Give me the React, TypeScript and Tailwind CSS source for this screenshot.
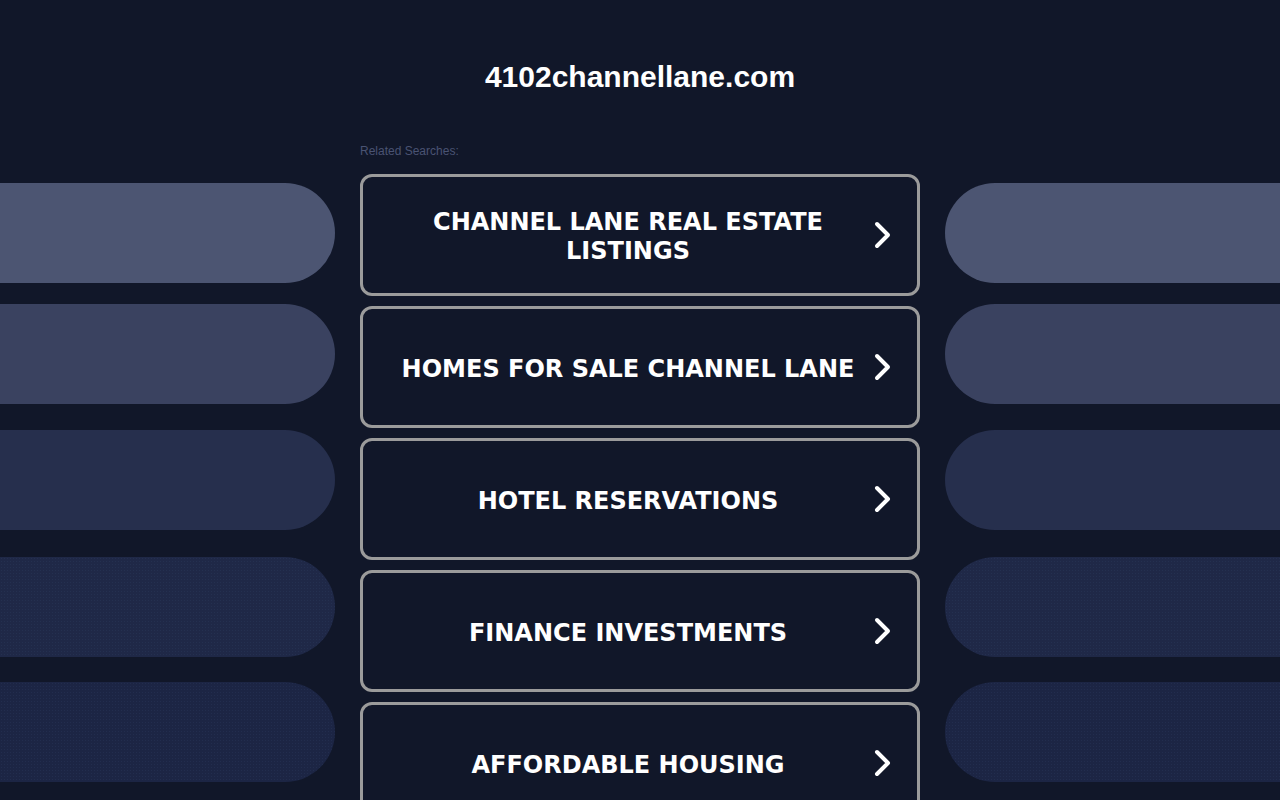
const LINKS = [
  "CHANNEL LANE REAL ESTATE LISTINGS",
  "HOMES FOR SALE CHANNEL LANE",
  "HOTEL RESERVATIONS",
  "FINANCE INVESTMENTS",
  "AFFORDABLE HOUSING",
];

function Chevron() {
  return (
    <svg width="24" height="28" viewBox="0 0 24 28" className="shrink-0">
      <polyline points="6,3 17,14 6,25" fill="none" stroke="#fff" strokeWidth="4" strokeLinecap="round" strokeLinejoin="round" />
    </svg>
  );
}

function SidePills({ side }: { side: "left" | "right" }) {
  const round = side === "left" ? "rounded-r-full" : "rounded-l-full";
  return (
    <div className="flex flex-col pt-[183px]">
      <div className={`h-[100px] bg-[#4c5572] ${round}`} />
      <div className={`mt-[21px] h-[100px] bg-[#3a4260] ${round}`} />
      <div className={`mt-[26px] h-[100px] bg-[#262f4d] ${round}`} />
      <div className={`mt-[27px] h-[100px] bg-[#1f2847] bg-[radial-gradient(#243050_1px,transparent_1px)] bg-[length:3px_3px] ${round}`} />
      <div className={`mt-[25px] h-[100px] bg-[#1c2544] bg-[radial-gradient(#222d4e_1px,transparent_1px)] bg-[length:3px_3px] ${round}`} />
    </div>
  );
}

export default function App() {
  return (
    <div className="h-[800px] overflow-hidden bg-[#111729] font-['Liberation_Sans',Arial,sans-serif]">
      <div className="grid grid-cols-[335px_560px_335px] gap-x-[25px]">
        <SidePills side="left" />
        <main className="flex flex-col pt-[60px]">
          <h1 className="text-center text-[30px] font-bold leading-[34px] text-white">4102channellane.com</h1>
          <p className="mt-[50px] text-[12px] leading-[14px] text-[#4a5373]">Related Searches:</p>
          <div className="mt-[16px] flex flex-col gap-[10px]">
            {LINKS.map((label) => (
              <a
                key={label}
                href="#"
                className="flex h-[122px] items-center rounded-xl border-[3px] border-[#9b9b9b] px-[22px]"
              >
                <span className="flex-1 pt-[4px] text-center font-['DejaVu_Sans',Verdana,sans-serif] text-[24px] font-bold leading-[29px] text-white">
                  {label}
                </span>
                <Chevron />
              </a>
            ))}
          </div>
        </main>
        <SidePills side="right" />
      </div>
    </div>
  );
}
